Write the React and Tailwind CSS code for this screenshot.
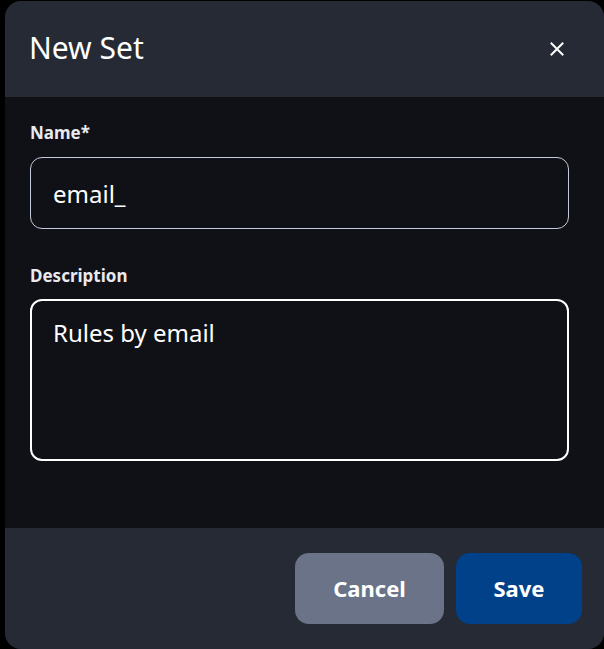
import React, { useState } from 'react'

export default function App(){
  const [name, setName] = useState('email_')
  const [desc, setDesc] = useState('Rules by email')

  return (
    <div className="w-[604px] h-[649px] bg-black pl-[5px] pt-[1px] overflow-hidden" style={{fontFamily:'"Noto Sans", "Open Sans", sans-serif'}}>
      <div className="w-[599px] h-[648px] rounded-2xl overflow-hidden flex flex-col bg-[#101116]">
        <div className="h-[96px] bg-[#262a35] flex items-center justify-between pl-[24px] pr-[40px] shrink-0">
          <div className="text-[30px] text-white leading-none pb-[2px]">New Set</div>
          <button className="text-white">
            <svg width="14" height="14" viewBox="0 0 14 14" fill="none" stroke="white" strokeWidth="2" strokeLinecap="square">
              <path d="M1.5 1.5 L12.5 12.5 M12.5 1.5 L1.5 12.5"/>
            </svg>
          </button>
        </div>
        <div className="flex-1 px-[25px] pt-[24px]">
          <label className="block text-[17px] font-bold text-[#e8eaf0] leading-6">Name*</label>
          <input
            className="mt-[12px] w-[539px] h-[72px] rounded-xl border border-[#c3cadb] bg-transparent px-[22px] text-[24px] text-white outline-none"
            value={name}
            onChange={e=>setName(e.target.value)}
          />
          <label className="block mt-[35px] text-[17px] font-bold text-[#e8eaf0] leading-6">Description</label>
          <textarea
            className="mt-[11px] block w-[539px] h-[162px] rounded-xl border-2 border-white bg-transparent px-[21px] pt-[16px] text-[24px] text-white outline-none resize-none leading-8"
            value={desc}
            onChange={e=>setDesc(e.target.value)}
          />
        </div>
        <div className="h-[121px] bg-[#262a35] shrink-0 flex items-start justify-end gap-[12px] pt-[25px] pr-[22px]">
          <button className="w-[149px] h-[71px] rounded-[14px] bg-[#6a7387] text-white text-[22px] font-bold">Cancel</button>
          <button className="w-[126px] h-[71px] rounded-[14px] bg-[#01418a] text-white text-[22px] font-bold">Save</button>
        </div>
      </div>
    </div>
  )
}
